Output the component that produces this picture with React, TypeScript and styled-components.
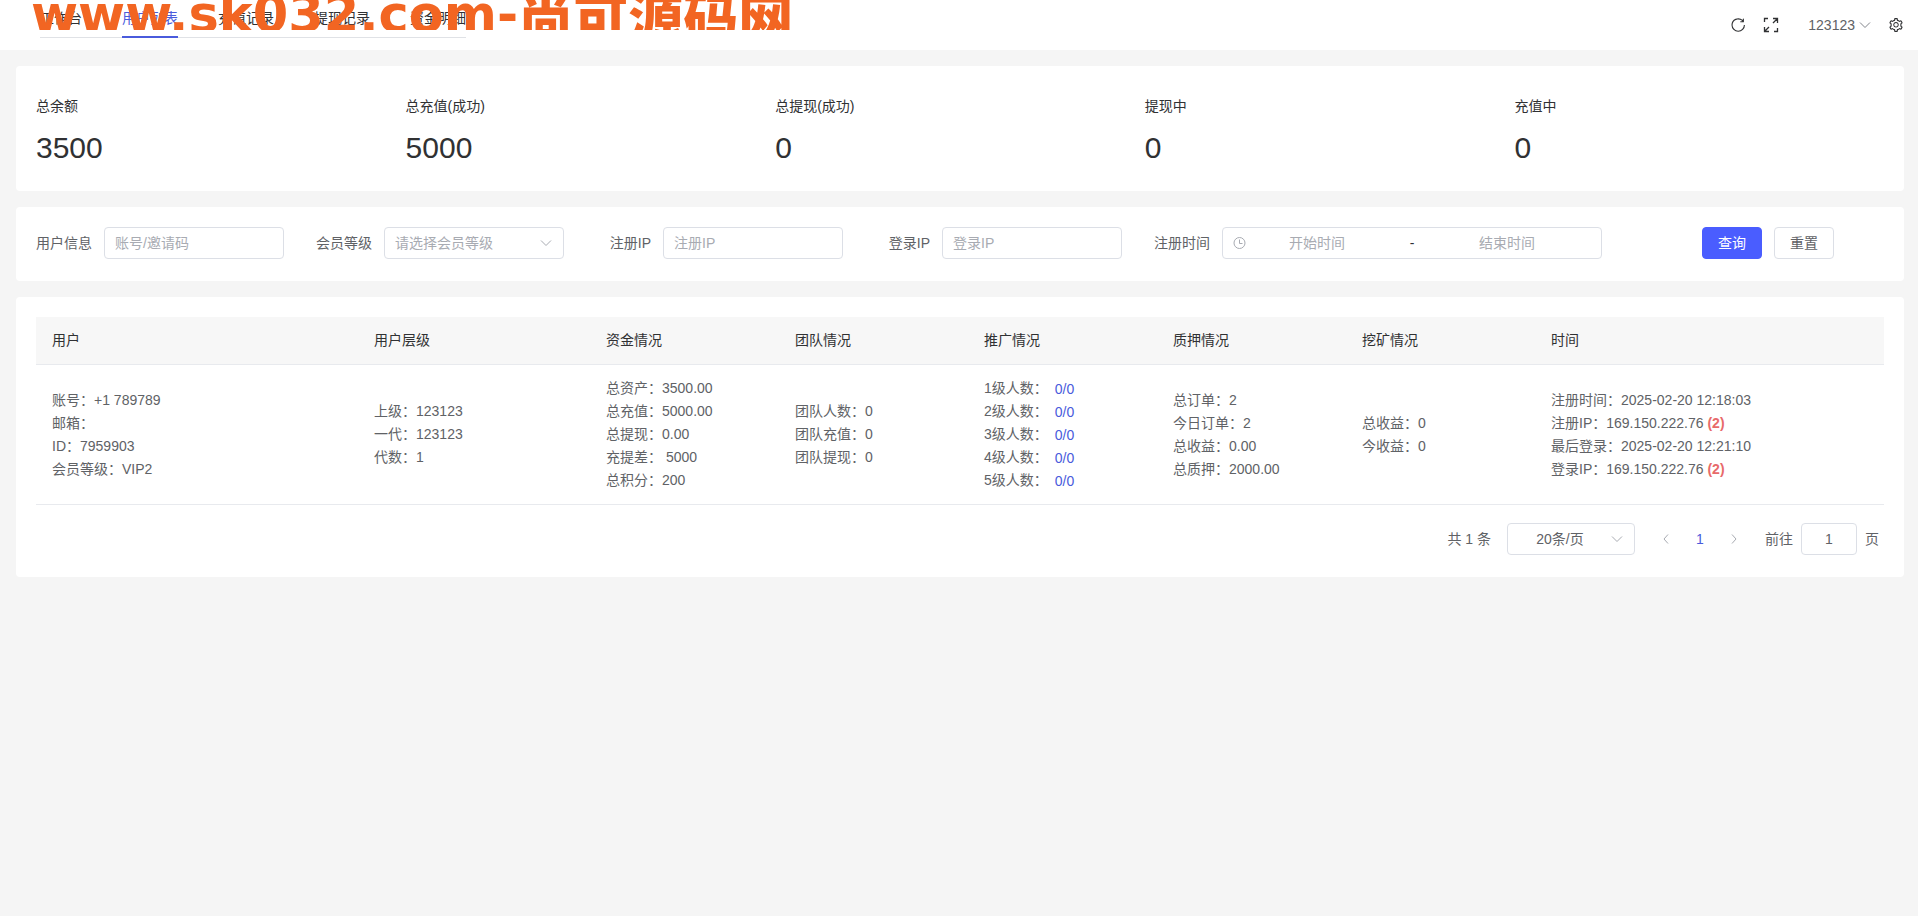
import React from 'react';
import styled, { createGlobalStyle } from 'styled-components';
import { AiOutlineSetting } from 'react-icons/ai';

const Global = createGlobalStyle`
  *, *::before, *::after { box-sizing: border-box; }
  body {
    margin: 0;
    background: #f5f5f5;
    color: #606266;
    font: 14px/23px "Liberation Sans", "Noto Sans CJK SC", sans-serif;
  }
  button, input, select { font: inherit; color: inherit; }
`;

const Header = styled.header`
  position: relative;
  display: flex;
  justify-content: space-between;
  height: 50px;
  padding: 0 14px 0 40px;
  background: #fff;
`;

const Tabs = styled.nav`
  display: flex;
  gap: 40px;
  height: 38px;
  border-bottom: 1px solid #e0e2e6;
`;

const Tab = styled.a<{ $active?: boolean }>`
  height: 38px;
  line-height: 36px;
  color: ${(p) => (p.$active ? '#4a5bdc' : '#303133')};
  border-bottom: 2px solid ${(p) => (p.$active ? '#4a5bdc' : 'transparent')};
  text-decoration: none;
`;

const Banner = styled.div`
  position: absolute;
  top: 0;
  left: 31px;
  height: 30px;
  overflow: hidden;
  display: flex;
  align-items: flex-end;
  color: #f26522;
  white-space: nowrap;
  pointer-events: none;
`;

const BannerText = styled.span`
  font: 700 51px/54px "DejaVu Sans", sans-serif;
  margin-bottom: -12px;
`;

const BannerName = styled.span`
  font: 900 55px/54px "Noto Sans CJK SC", sans-serif;
  margin-bottom: -12px;
`;

const Tools = styled.div`
  display: flex;
  align-items: center;
`;

const IconButton = styled.button`
  display: flex;
  align-items: center;
  justify-content: center;
  width: 33px;
  height: 32px;
  padding: 0;
  border: 0;
  background: none;
  color: #303133;
`;

const UserButton = styled(IconButton)`
  width: auto;
  gap: 3px;
  margin: 0 7px 0 21px;
  color: #606266;
`;

const SettingButton = styled(IconButton)`
  width: 16px;
  margin-left: 9px;
`;

const Main = styled.main`
  display: flex;
  flex-direction: column;
  gap: 16px;
  padding: 16px 14px 16px 16px;
`;

const Card = styled.section`
  padding: 20px 20px 22px;
  border-radius: 4px;
  background: #fff;
`;

const Stats = styled.dl`
  display: grid;
  grid-template-columns: repeat(5, 1fr);
  margin: 0;
  padding: 8px 0 3px;
  color: #303133;
`;

const StatLabel = styled.dt`
  line-height: 24px;
`;

const StatValue = styled.dd`
  margin: 12px 0 0;
  font-size: 30px;
  line-height: 36px;
`;

const Filters = styled.form`
  display: flex;
  flex-wrap: wrap;
  gap: 32px;
`;

const Field = styled.div`
  display: flex;
  align-items: center;
  gap: 12px;
`;

const Label = styled.label<{ $short?: boolean }>`
  width: ${(p) => (p.$short ? 55 : 56)}px;
  text-align: right;
  white-space: nowrap;
`;

const TextInput = styled.input`
  width: 180px;
  height: 32px;
  padding: 0 10px;
  border: 1px solid #dcdfe6;
  border-radius: 4px;
  background: #fff;
  outline: 0;
  &::placeholder { color: #a8abb2; opacity: 1; }
`;

const PageInput = styled(TextInput)`
  width: 56px;
  text-align: center;
`;

const SelectBox = styled.span<{ $width: number }>`
  display: grid;
  align-items: center;
  width: ${(p) => p.$width}px;
  & > * { grid-area: 1 / 1; }
  & > svg { justify-self: end; margin-right: 11px; pointer-events: none; }
`;

const Select = styled.select<{ $center?: boolean }>`
  width: 100%;
  height: 32px;
  padding: 0 ${(p) => (p.$center ? 32 : 10)}px 0 10px;
  border: 1px solid #dcdfe6;
  border-radius: 4px;
  background: #fff;
  color: ${(p) => (p.$center ? '#606266' : '#a8abb2')};
  appearance: none;
  text-align: ${(p) => (p.$center ? 'center' : 'left')};
  text-align-last: ${(p) => (p.$center ? 'center' : 'left')};
`;

const RangeBox = styled.div`
  display: flex;
  align-items: center;
  width: 380px;
  height: 32px;
  padding: 0 24px 0 10px;
  border: 1px solid #dcdfe6;
  border-radius: 4px;
  color: #303133;
`;

const RangeInput = styled.input`
  width: 140px;
  padding: 0;
  border: 0;
  outline: 0;
  background: none;
  text-align: center;
  &::placeholder { color: #a8abb2; opacity: 1; }
`;

const RangeDash = styled.span`
  flex: 1;
  text-align: center;
`;

const Actions = styled.div`
  display: flex;
  gap: 12px;
  margin-left: 68px;
`;

const Button = styled.button<{ $primary?: boolean }>`
  width: 60px;
  height: 32px;
  padding: 0;
  border: 1px solid ${(p) => (p.$primary ? '#4a5dff' : '#dcdfe6')};
  border-radius: 4px;
  background: ${(p) => (p.$primary ? '#4a5dff' : '#fff')};
  color: ${(p) => (p.$primary ? '#fff' : '#606266')};
`;

const Table = styled.table`
  width: 100%;
  table-layout: fixed;
  border-collapse: separate;
  border-spacing: 0;
`;

const HeadCell = styled.th`
  height: 48px;
  padding: 0 16px;
  border-bottom: 1px solid #e8eaee;
  background: #f7f7f7;
  color: #303133;
  font-weight: 400;
  text-align: left;
`;

const Cell = styled.td`
  padding: 12px 16px;
  border-bottom: 1px solid #e8eaee;
  vertical-align: middle;
`;

const Line = styled.div`
  height: 23px;
  white-space: pre;
`;

const CountLink = styled.a`
  margin-left: 7px;
  color: #4a5bdc;
  line-height: 16px;
  text-decoration: none;
  vertical-align: -1px;
`;

const Repeat = styled.b`
  color: #e86a6a;
`;

const Pager = styled.nav`
  display: flex;
  align-items: center;
  justify-content: flex-end;
  padding: 18px 5px 0 0;
`;

const PageButtons = styled.div`
  display: flex;
  margin: 0 14px;
`;

const PageButton = styled(IconButton)<{ $active?: boolean }>`
  width: 34px;
  color: ${(p) => (p.$active ? '#4a5bdc' : '#a8abb2')};
`;

const PagerText = styled.span`
  margin-right: 16px;
`;

const JumpLabel = styled.label`
  display: flex;
  align-items: center;
  gap: 8px;
`;

type ChevronProps = { dir?: 'down' | 'left' | 'right'; color?: string };

const chevronPaths = {
  down: 'M2 4.5 7 9.5l5-5',
  left: 'M9 2.5 5 7l4 4.5',
  right: 'M5 2.5 9 7l-4 4.5',
};

const Chevron = ({ dir = 'down', color = '#a8abb2' }: ChevronProps) => (
  <svg width="14" height="14" viewBox="0 0 14 14" fill="none" stroke={color} aria-hidden="true">
    <path d={chevronPaths[dir]} />
  </svg>
);

const RefreshIcon = () => (
  <svg width="18" height="18" viewBox="0 0 1024 1024" fill="currentColor" aria-hidden="true">
    <path d="M784.512 230.272v-50.56a32 32 0 1 1 64 0v149.056a32 32 0 0 1-32 32H667.52a32 32 0 1 1 0-64h92.992A320 320 0 1 0 524.8 833.152a320 320 0 0 0 320-320h64a384 384 0 0 1-384 384 384 384 0 0 1-384-384 384 384 0 0 1 643.712-282.88z" />
  </svg>
);

const FullScreenIcon = () => (
  <svg width="16" height="16" viewBox="0 0 16 16" fill="none" stroke="currentColor" strokeWidth="1.3" aria-hidden="true">
    <path d="M1.5 5v-3.5h3.500M10 1.500h4.500V6M14.500 11v3.500h-3.500M6 14.500H1.500V10M14.300 1.700l-4.300 4.300M1.700 14.300l4.300-4.300" />
  </svg>
);

const ClockIcon = () => (
  <svg width="14" height="14" viewBox="0 0 14 14" fill="none" stroke="#a8abb2" aria-hidden="true">
    <circle cx="6.5" cy="7" r="5.5" />
    <path d="M6.500 3.500v4h3" />
  </svg>
);

const tabs = ['工作台', '用户列表', '充值记录', '提现记录', '资金明细'];

const stats = [
  ['总余额', '3500'],
  ['总充值(成功)', '5000'],
  ['总提现(成功)', '0'],
  ['提现中', '0'],
  ['充值中', '0'],
];

const columns: { title: string; width: number; lines: React.ReactNode[] }[] = [
  { title: '用户', width: 322, lines: ['账号：+1 789789', '邮箱：', 'ID：7959903', '会员等级：VIP2'] },
  { title: '用户层级', width: 232, lines: ['上级：123123', '一代：123123', '代数：1'] },
  {
    title: '资金情况',
    width: 189,
    lines: ['总资产：3500.00', '总充值：5000.00', '总提现：0.00', '充提差： 5000', '总积分：200'],
  },
  { title: '团队情况', width: 189, lines: ['团队人数：0', '团队充值：0', '团队提现：0'] },
  {
    title: '推广情况',
    width: 189,
    lines: [1, 2, 3, 4, 5].map((level) => (
      <>
        {level}级人数：<CountLink href="#team">0/0</CountLink>
      </>
    )),
  },
  { title: '质押情况', width: 189, lines: ['总订单：2', '今日订单：2', '总收益：0.00', '总质押：2000.00'] },
  { title: '挖矿情况', width: 189, lines: ['总收益：0', '今收益：0'] },
  {
    title: '时间',
    width: 349,
    lines: [
      '注册时间：2025-02-20 12:18:03',
      <>注册IP：169.150.222.76 <Repeat>(2)</Repeat></>,
      '最后登录：2025-02-20 12:21:10',
      <>登录IP：169.150.222.76 <Repeat>(2)</Repeat></>,
    ],
  },
];

export default function App() {
  return (
    <>
      <Global />
      <Header>
        <Tabs>
          {tabs.map((tab, i) => (
            <Tab key={tab} href="#tab" $active={i === 1}>{tab}</Tab>
          ))}
        </Tabs>
        <Tools>
          <IconButton aria-label="刷新"><RefreshIcon /></IconButton>
          <IconButton aria-label="全屏"><FullScreenIcon /></IconButton>
          <UserButton>123123<Chevron color="#82858b" /></UserButton>
          <SettingButton aria-label="设置"><AiOutlineSetting size={16} /></SettingButton>
        </Tools>
        <Banner>
          <BannerText>www.sk032.com-</BannerText>
          <BannerName>尚可源码网</BannerName>
        </Banner>
      </Header>
      <Main>
        <Card>
          <Stats>
            {stats.map(([label, value]) => (
              <div key={label}>
                <StatLabel>{label}</StatLabel>
                <StatValue>{value}</StatValue>
              </div>
            ))}
          </Stats>
        </Card>
        <Card>
          <Filters>
            <Field>
              <Label htmlFor="user">用户信息</Label>
              <TextInput id="user" placeholder="账号/邀请码" />
            </Field>
            <Field>
              <Label htmlFor="level">会员等级</Label>
              <SelectBox $width={180}>
                <Select id="level"><option>请选择会员等级</option></Select>
                <Chevron />
              </SelectBox>
            </Field>
            <Field>
              <Label htmlFor="regIp" $short>注册IP</Label>
              <TextInput id="regIp" placeholder="注册IP" />
            </Field>
            <Field>
              <Label htmlFor="loginIp" $short>登录IP</Label>
              <TextInput id="loginIp" placeholder="登录IP" />
            </Field>
            <Field>
              <Label htmlFor="start">注册时间</Label>
              <RangeBox>
                <ClockIcon />
                <RangeInput id="start" placeholder="开始时间" />
                <RangeDash>-</RangeDash>
                <RangeInput aria-label="结束时间" placeholder="结束时间" />
              </RangeBox>
            </Field>
            <Actions>
              <Button type="button" $primary>查询</Button>
              <Button type="reset">重置</Button>
            </Actions>
          </Filters>
        </Card>
        <Card>
          <Table>
            <colgroup>
              {columns.map((c) => <col key={c.title} width={c.width} />)}
            </colgroup>
            <thead>
              <tr>{columns.map((c) => <HeadCell key={c.title}>{c.title}</HeadCell>)}</tr>
            </thead>
            <tbody>
              <tr>
                {columns.map((c) => (
                  <Cell key={c.title}>
                    {c.lines.map((line, i) => <Line key={i}>{line}</Line>)}
                  </Cell>
                ))}
              </tr>
            </tbody>
          </Table>
          <Pager aria-label="分页">
            <PagerText>共 1 条</PagerText>
            <SelectBox $width={128}>
              <Select $center aria-label="每页条数"><option>20条/页</option></Select>
              <Chevron />
            </SelectBox>
            <PageButtons>
              <PageButton aria-label="上一页"><Chevron dir="left" /></PageButton>
              <PageButton $active>1</PageButton>
              <PageButton aria-label="下一页"><Chevron dir="right" /></PageButton>
            </PageButtons>
            <JumpLabel>前往<PageInput defaultValue="1" />页</JumpLabel>
          </Pager>
        </Card>
      </Main>
    </>
  );
}
